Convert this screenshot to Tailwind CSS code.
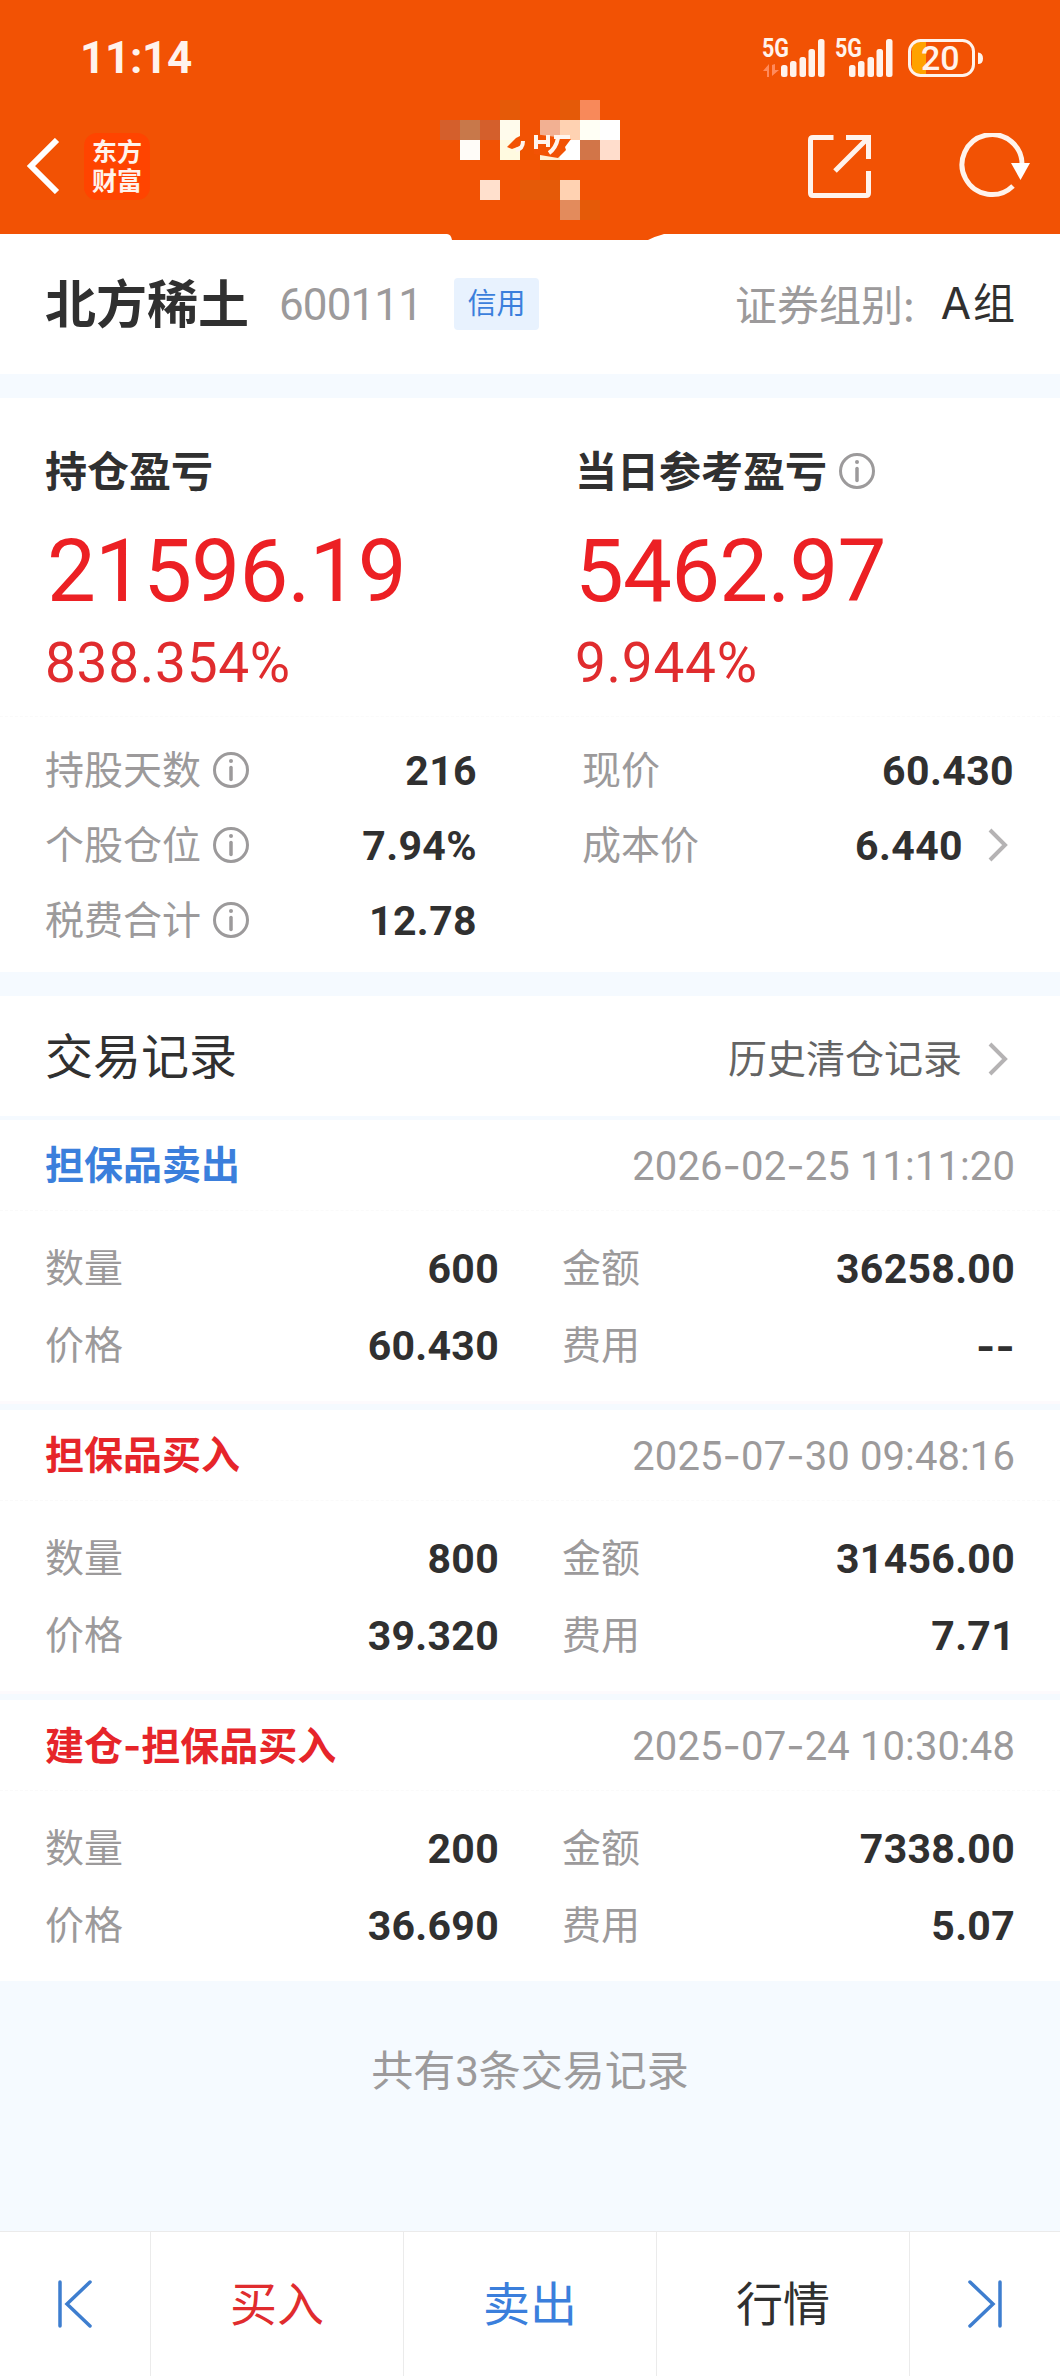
<!DOCTYPE html>
<html lang="zh-CN">
<head>
    <meta charset="UTF-8" />
    <meta name="viewport" content="width=device-width, initial-scale=1.0" />
    <title>北方稀土 600111</title>
    <script src="https://cdn.jsdelivr.net/npm/@tailwindcss/browser@4"></script>
</head>
<body class="w-[1060px] h-[2376px] flex flex-col overflow-hidden bg-[#f5faff] text-[#303030] font-['Roboto','Noto_Sans_CJK_SC',sans-serif]">
    <!-- Header -->
    <header class="relative h-[234px] shrink-0 bg-[#f25204] text-white">
        <!-- status bar -->
        <div class="h-[116px] pl-[80px] pr-[77px] flex items-center justify-between">
            <span class="text-[44px] leading-none font-bold tracking-[-0.3px] text-[#fff3ec]">11:14</span>
            <div class="flex items-center">
                <svg class="w-[124px] h-[38px] mr-[21px]" viewBox="0 0 130 38" preserveAspectRatio="xMinYMid slice" fill="#fff3ec" overflow="visible">
                    <text x="-1" y="18" font-family="Roboto" font-weight="700" font-size="25" textLength="27" lengthAdjust="spacingAndGlyphs">5G</text>
                    <text x="72" y="18" font-family="Roboto" font-weight="700" font-size="25" textLength="27" lengthAdjust="spacingAndGlyphs">5G</text>
                    <path d="M0 32L6 25V38H4V32ZM9 26V37L16 31H12V25Z" fill="#ff8a5c" />
                    <rect x="18" y="26" width="6.5" height="12" rx="2.5" />
                    <rect x="27" y="22" width="6.5" height="16" rx="2.5" />
                    <rect x="36.500" y="18" width="6.500" height="20" rx="2.5" />
                    <rect x="45.500" y="10" width="6.500" height="28" rx="2.5" />
                    <rect x="55" y="0" width="6.500" height="38" rx="2.5" />
                    <rect x="86" y="26" width="6.500" height="12" rx="2.5" />
                    <rect x="95" y="22" width="6.500" height="16" rx="2.5" />
                    <rect x="104.500" y="18" width="6.500" height="20" rx="2.5" />
                    <rect x="113.500" y="10" width="6.500" height="28" rx="2.5" />
                    <rect x="123" y="0" width="6.500" height="38" rx="2.5" />
                </svg>
                <svg class="w-[75px] h-[38px]" viewBox="0 0 75 38">
                    <path d="M12 3H18V35H12Q4 35 4 27V11Q4 3 12 3Z" fill="#ffa200" />
                    <rect x="1.500" y="1.500" width="64" height="35" rx="11" fill="none" stroke="#fff3ec" stroke-width="3" />
                    <path d="M70 13.500Q75 14 75 19.500T70 25Z" fill="#fff3ec" />
                    <text x="13" y="31" font-family="Roboto" font-weight="500" font-size="34" fill="#fff3ec">20</text>
                </svg>
            </div>
        </div>
        <!-- title bar -->
        <div class="h-[100px] pl-[26px] pr-[28px] flex items-center">
            <svg class="w-[34px] h-[56px]" viewBox="0 0 34 56" fill="none" stroke="#fff" stroke-width="6"><path d="M31 2L5 28L31 54" /></svg>
            <div class="ml-[24px] w-[66px] h-[67px] rounded-[13px] bg-[#ff4400] flex flex-col items-center justify-center pt-[2px] text-[25px] leading-[29px] font-bold text-[#fff3ec]">
                <span>东方</span>
                <span>财富</span>
            </div>
            <svg class="ml-auto w-[63px] h-[63px]" viewBox="0 0 63 63" fill="none" stroke="#fff3ec" stroke-width="5">
                <path d="M25.500 2.500H5Q2.500 2.500 2.500 5V58Q2.500 60.500 5 60.500H58Q60.500 60.500 60.500 58V36" />
                <path d="M38 2.500H60.500V24M60 3L27 36" />
            </svg>
            <svg class="ml-[88px] w-[73px] h-[66px]" viewBox="0 0 73 66" fill="none">
                <path d="M63 33A30 30 0 1 0 54 53" stroke="#fff3ec" stroke-width="5" />
                <path d="M52 30H71L61.500 47Z" fill="#fff" />
            </svg>
        </div>
        <!-- masked account title -->
        <svg class="absolute left-[440px] top-[100px] w-[230px] h-[140px]" viewBox="0 0 230 140" shape-rendering="crispEdges">
            <path d="M0 134H7Q11 134 12 140H208Q213 137 221 135L224 134V130H0Z" fill="#f25204" shape-rendering="auto" />
            <rect x="60" y="0" width="20" height="20" fill="#e55a08" />
            <rect x="120" y="0" width="20" height="20" fill="#e55a08" />
            <rect x="140" y="0" width="20" height="20" fill="#f8895a" />
            <rect x="0" y="20" width="20" height="20" fill="#d45f2c" />
            <rect x="20" y="20" width="20" height="20" fill="#c8784a" />
            <rect x="40" y="20" width="20" height="20" fill="#d45f2c" />
            <rect x="60" y="20" width="20" height="20" fill="#fffbec" />
            <rect x="100" y="20" width="20" height="20" fill="#f2b092" />
            <rect x="120" y="20" width="20" height="20" fill="#ffd2b2" />
            <rect x="140" y="20" width="20" height="20" fill="#fffff5" />
            <rect x="160" y="20" width="20" height="20" fill="#fff" />
            <rect x="20" y="40" width="20" height="20" fill="#fffcf8" />
            <rect x="60" y="40" width="20" height="20" fill="#fffae0" />
            <rect x="80" y="40" width="20" height="20" fill="#ef5200" />
            <rect x="100" y="40" width="20" height="20" fill="#fff0d5" />
            <rect x="120" y="40" width="20" height="20" fill="#fff" />
            <rect x="140" y="40" width="20" height="20" fill="#d27548" />
            <rect x="160" y="40" width="20" height="20" fill="#ffddcc" />
            <rect x="100" y="60" width="20" height="20" fill="#e95400" />
            <rect x="40" y="80" width="20" height="20" fill="#ffe0cd" />
            <rect x="80" y="80" width="40" height="20" fill="#e55a08" />
            <rect x="120" y="80" width="20" height="20" fill="#ffd2b2" />
            <rect x="120" y="100" width="20" height="20" fill="#e38b5c" />
            <rect x="140" y="100" width="20" height="20" fill="#e55a08" />
            <g shape-rendering="auto">
                <path d="M67 47L76 38L80 36V46L72 49Z" fill="#f25204" />
                <path d="M94 34L131 39L125 47L126 50L118 58L100 55L94 54Z" fill="#f25204" />
                <path d="M83 41Q83 49 76 50" fill="none" stroke="#fff5ee" stroke-width="4" />
                <path d="M96 35V49M96 42H107M108 35V47M118 38Q116 48 109 53M114 37H130" fill="none" stroke="#fff5ee" stroke-width="4" />
            </g>
        </svg>
    </header>

    <main class="flex-1">
        <!-- Stock name -->
        <section class="h-[140px] pl-[45px] pr-[45px] flex items-center bg-white">
            <h1 class="pt-[3px] text-[51px] leading-none font-bold">北方稀土</h1>
            <span class="ml-[30px] pt-[2px] text-[44px] leading-none tracking-[-0.9px] text-[#9c9a9b]">600111</span>
            <span class="ml-[32px] w-[85px] h-[52px] rounded-[4px] bg-[#e8f2fe] flex items-center justify-center pt-[2px] text-[29px] text-[#3b7fdc]">信用</span>
            <span class="ml-auto pb-[3px] text-[42px] leading-none text-[#9c9a9b] font-['Noto_Sans_CJK_SC']">证券组别:</span>
            <span class="ml-[26px] pb-[3px] text-[42px] leading-none font-['Noto_Sans_CJK_SC']"><span class="text-[44px] tracking-[2px] font-['Inter']">A</span>组</span>
        </section>

        <!-- Profit and loss -->
        <section class="mt-[24px] h-[574px] bg-white">
            <div class="h-[319px] pt-[43px] pl-[45px] grid grid-cols-[530px_1fr] border-b border-dashed border-[#fafafa]">
                <div>
                    <h2 class="h-[60px] pt-[2px] flex items-center text-[42px] font-bold">持仓盈亏</h2>
                    <div class="h-[138px] pl-[2px] pt-[3px] flex items-center text-[87px] leading-none tracking-[-0.8px] text-[#ec2024]">21596.19</div>
                    <div class="h-[46px] pt-[3px] flex items-center text-[55px] leading-none tracking-[0.7px] text-[#e02c2e]">838.354%</div>
                </div>
                <div>
                    <h2 class="h-[60px] flex items-center text-[42px] font-bold"><span class="pt-[2px]">当日参考盈亏</span>
                        <svg class="ml-[12px] w-[36px] h-[36px]" viewBox="0 0 36 36" fill="none" stroke="#9c9a9b" stroke-width="3"><circle cx="18" cy="18" r="16.500" /><circle cx="18" cy="9" r="2" fill="#9c9a9b" stroke="none" /><path d="M18 15.500V27.500" stroke-linecap="round" stroke-width="3.500" /></svg>
                    </h2>
                    <div class="h-[138px] pt-[3px] flex items-center text-[87px] leading-none tracking-[-0.8px] text-[#ec2024]">5462.97</div>
                    <div class="h-[46px] pt-[3px] flex items-center text-[55px] leading-none tracking-[0.7px] text-[#e02c2e]">9.944%</div>
                </div>
            </div>
            <div id="details" class="pt-[15px] pl-[45px] pr-[46px] grid grid-cols-[431px_432px] justify-between"></div>
        </section>

        <!-- Trade records -->
        <section class="mt-[24px] h-[120px] pl-[45px] pr-[46px] flex items-center justify-between bg-white">
            <h2 class="pt-[3px] text-[48px] leading-none">交易记录</h2>
            <a class="pt-[5px] flex items-center text-[39px] leading-none text-[#646464]"><span class="pt-[3px]">历史清仓记录</span>
                <svg class="ml-[25px] mr-[5px] w-[22px] h-[34px]" viewBox="0 0 22 34" fill="none" stroke="#b5b3b4" stroke-width="4"><path d="M3 2L18 17L3 32" /></svg>
            </a>
        </section>
        <div id="records" class="mt-[4px] flex flex-col gap-[6px]"></div>
        <p class="mt-[59px] h-[60px] pt-[2px] flex items-center justify-center text-[42px] text-[#9c9a9b]">共有3条交易记录</p>
    </main>

    <!-- Bottom bar -->
    <nav class="h-[145px] shrink-0 grid grid-cols-[151px_253px_253px_253px_150px] border-t border-[#ebebeb] divide-x divide-[#ebebeb] bg-white text-[47px]">
        <button class="flex items-center justify-center">
            <svg class="w-[34px] h-[48px]" viewBox="0 0 34 48" fill="none" stroke="#3e7ecf" stroke-width="3.500" stroke-linecap="round"><path d="M2 2V46M32 2L9 24L32 46" /></svg>
        </button>
        <button class="pt-[2px] text-[#e02c2e]">买入</button>
        <button class="pt-[2px] text-[#3b7fdc]">卖出</button>
        <button class="pt-[2px]">行情</button>
        <button class="flex items-center justify-center">
            <svg class="w-[34px] h-[48px]" viewBox="0 0 34 48" fill="none" stroke="#3e7ecf" stroke-width="3.500" stroke-linecap="round"><path d="M32 2V46M2 2L25 24L2 46" /></svg>
        </button>
    </nav>

    <script>
        // ---------- DATA --------------------------------------------
        const details = [
            { label: "持股天数", value: "216", info: true },
            { label: "现价", value: "60.430" },
            { label: "个股仓位", value: "7.94%", info: true },
            { label: "成本价", value: "6.440", link: true },
            { label: "税费合计", value: "12.78", info: true },
        ];

        const records = [
            { type: "担保品卖出", side: "sell", time: "2026-02-25 11:11:20", qty: "600", amount: "36258.00", price: "60.430", fee: "--" },
            { type: "担保品买入", side: "buy", time: "2025-07-30 09:48:16", qty: "800", amount: "31456.00", price: "39.320", fee: "7.71" },
            { type: "建仓-担保品买入", side: "buy", time: "2025-07-24 10:30:48", qty: "200", amount: "7338.00", price: "36.690", fee: "5.07" },
        ];

        // ---------- RENDERING ---------------------------------------
        const infoIcon = `<svg class="ml-[12px] w-[36px] h-[36px]" viewBox="0 0 36 36" fill="none" stroke="#9c9a9b" stroke-width="3"><circle cx="18" cy="18" r="16.500" /><circle cx="18" cy="9" r="2" fill="#9c9a9b" stroke="none" /><path d="M18 15.500V27.500" stroke-linecap="round" stroke-width="3.500" /></svg>`;
        const chevron = `<svg class="ml-[24px] mr-[5px] w-[22px] h-[34px]" viewBox="0 0 22 34" fill="none" stroke="#b5b3b4" stroke-width="4"><path d="M3 2L18 17L3 32" /></svg>`;

        // hyphens are set wider than the digits' own font has them
        function dashes(text) {
            return text.replace(/-/g, `<span class="font-['Inter']">-</span>`);
        }

        document.getElementById("details").innerHTML = details.map((d, i) => `
            <div class="h-[75px] flex items-center text-[39px] leading-none ${i % 2 ? "" : "-mr-px"}">
                <span class="pt-[3px] text-[#9c9a9b]">${d.label}</span>${d.info ? infoIcon : ""}
                <span class="ml-auto pt-[3px] text-[41px] font-bold tracking-[0.4px]">${d.value}</span>${d.link ? chevron : ""}
            </div>`).join("");

        function cell(label, value) {
            return `
                <div class="h-[77px] pt-[2px] flex items-center justify-between">
                    <span class="text-[39px] leading-none text-[#9c9a9b]">${label}</span>
                    <span class="text-[41px] leading-none font-bold tracking-[0.3px]">${dashes(value)}</span>
                </div>`;
        }

        document.getElementById("records").innerHTML = records.map(r => `
            <article class="h-[284px] bg-white border-b-[3px] border-[#fdfafd] last:h-[281px] last:border-b-0">
                <div class="h-[91px] pt-[2px] pl-[45px] pr-[45px] flex items-center justify-between border-b border-dashed border-[#fafafa]">
                    <h3 class="text-[39px] leading-none font-bold ${r.side === "sell" ? "text-[#3b7fdc]" : "text-[#e6252a]"}">${dashes(r.type)}</h3>
                    <time class="text-[40px] leading-none tracking-[0.1px] text-[#9c9a9b]">${dashes(r.time)}</time>
                </div>
                <div class="pt-[19px] pl-[45px] pr-[45px] grid grid-cols-[454px_453px] justify-between">
                    ${cell("数量", r.qty)}${cell("金额", r.amount)}${cell("价格", r.price)}${cell("费用", r.fee)}
                </div>
            </article>`).join("");
    </script>
</body>
</html>
